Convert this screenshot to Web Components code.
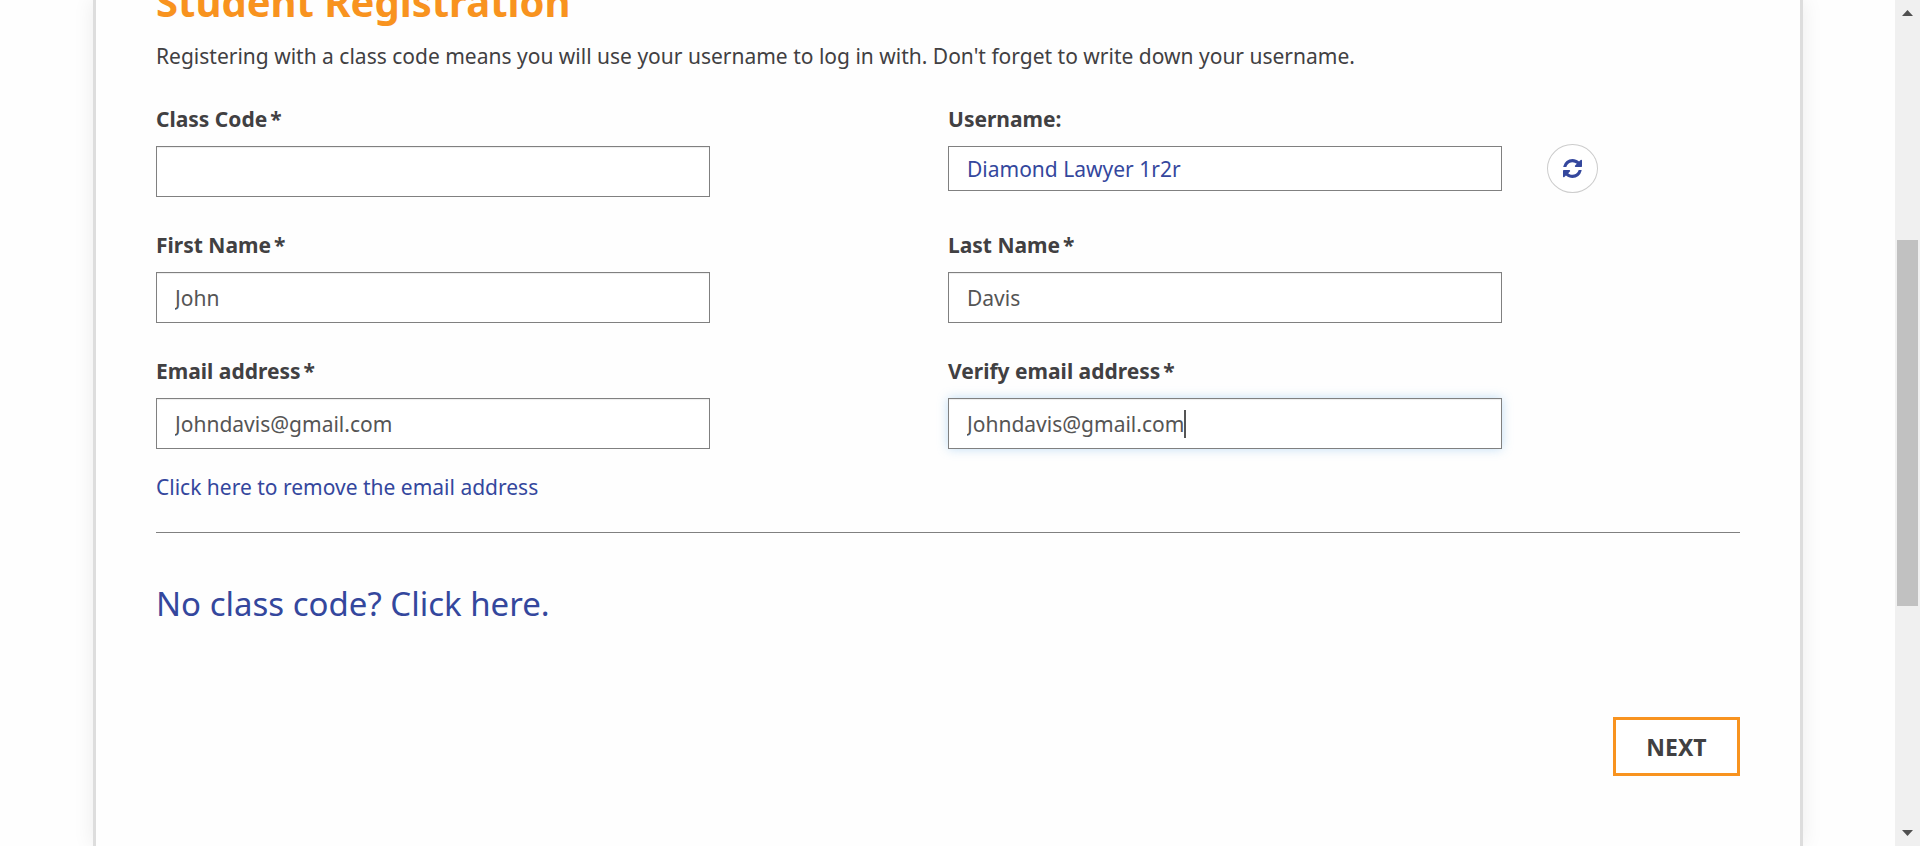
<!DOCTYPE html>
<html lang="en">
<head>
<meta charset="utf-8">
<title>Student Registration</title>
<style>
  html, body { margin: 0; height: 100%; }
  body {
    overflow: hidden;
    background: #fefefe;
    color: #414042;
    font-family: "Noto Sans", "Open Sans", sans-serif;
    font-size: 21px;
    line-height: 32px;
  }
</style>
</head>
<body>
<registration-page></registration-page>

<template id="page-template">
  <style>
    :host { display: flex; height: 100vh; overflow: hidden; }
    main { flex: 1; display: grid; min-width: 0; padding: 0 92px 0 93px; }
  </style>
  <main><registration-card></registration-card></main>
  <scroll-rail></scroll-rail>
</template>

<template id="card-template">
  <style>
    :host {
      display: block;
      border: solid #ddd;
      border-width: 0 3px;
      padding: 0 60px;
      background: #fefefe;
      box-shadow: 0 0 20px rgba(0, 0, 0, .08);
    }
    h1 {
      margin: -28px 0 0;
      color: #f8931f;
      font-size: 40px;
      line-height: 60px;
      font-weight: 700;
    }
    p { margin: 8px 0 0; }
    form { margin-top: 32px; }
    .rows { display: grid; grid-template-columns: 1fr 1fr; row-gap: 33px; }
    a { color: #34479d; text-decoration: none; }
    .remove { display: inline-block; margin-top: 22px; }
    hr { margin: 29px 0 0; border: 0; border-top: 1px solid #808080; }
    .no-code { display: inline-block; margin-top: 47px; font-size: 33px; line-height: 48px; }
    .actions { display: flex; justify-content: flex-end; margin-top: 89px; }
  </style>
  <h1>Student Registration</h1>
  <p>Registering with a class code means you will use your username to log in with. Don't forget to write down your username.</p>
  <form>
    <div class="rows">
      <form-field label="Class Code" required></form-field>
      <form-field label="Username:" value="Diamond Lawyer 1r2r" generated><refresh-button slot="action"></refresh-button></form-field>
      <form-field label="First Name" value="John" required></form-field>
      <form-field label="Last Name" value="Davis" required></form-field>
      <form-field label="Email address" value="Johndavis@gmail.com" type="email" required></form-field>
      <form-field label="Verify email address" value="Johndavis@gmail.com" type="email" required active></form-field>
    </div>
    <a class="remove" href="#remove">Click here to remove the email address</a>
    <hr>
    <a class="no-code" href="#no-code">No class code? Click here.</a>
    <div class="actions"><outline-button>NEXT</outline-button></div>
  </form>
</template>

<template id="field-template">
  <style>
    :host { display: block; }
    label { display: flex; gap: 3px; font-weight: 700; line-height: 30px; margin-bottom: 12px; }
    .line { display: flex; align-items: center; height: 51px; }
    .box { position: relative; width: 70%; }
    input {
      display: block;
      box-sizing: border-box;
      width: 100%;
      height: 51px;
      margin: 0;
      padding: 0 18px;
      border: 1px solid #808080;
      border-radius: 0;
      outline: 0;
      background: #fff;
      box-shadow: inset 0 1px 1px rgba(0, 0, 0, .075);
      color: #555;
      font: inherit;
    }
    :host([generated]) .line { height: 45px; }
    :host([generated]) input { height: 45px; color: #34479d; box-shadow: none; }
    :host([active]) input {
      caret-color: transparent;
      box-shadow: inset 0 1px 1px rgba(0, 0, 0, .075), 0 0 10px rgba(102, 175, 233, .4);
    }
    .caret { display: none; }
    :host([active]) .caret {
      display: block;
      position: absolute;
      top: 12px;
      left: calc(19px + var(--typed, 0px));
      width: 2px;
      height: 28px;
      background: #555;
    }
    ::slotted(*) { margin-left: 45px; }
  </style>
  <label for="control"><span class="text"></span><span class="star">*</span></label>
  <div class="line">
    <div class="box"><input id="control"><span class="caret"></span></div>
    <slot name="action"></slot>
  </div>
</template>

<template id="refresh-template">
  <style>
    :host { display: block; }
    button {
      display: grid;
      place-items: center;
      box-sizing: border-box;
      width: 51px;
      height: 49px;
      padding: 0;
      border: 1px solid #ccc;
      border-radius: 50%;
      background: #fff;
      color: #34479d;
    }
    svg { display: block; width: 19px; height: 19px; fill: currentColor; }
  </style>
  <button type="button" aria-label="Generate a new username">
    <svg viewBox="0 -448 1536 1536" aria-hidden="true"><path d="M1511 480q0 5-1 7-64 268-268 434.500t-478 166.500q-146 0-282.500-55t-243.500-157l-129 129q-19 19-45 19t-45-19-19-45v-448q0-26 19-45t45-19h448q26 0 45 19t19 45-19 45l-137 137q71 66 161 102t187 36q134 0 250-65t186-179q11-17 53-117 8-23 30-23h192q13 0 22.500 9.500t9.500 22.500zm25-800v448q0 26-19 45t-45 19h-448q-26 0-45-19t-19-45 19-45l138-138q-148-137-349-137-134 0-250 65t-186 179q-11 17-53 117-8 23-30 23h-199q-13 0-22.500-9.500t-9.500-22.500v-7q65-268 270-434.500t480-166.500q146 0 284 55.500t245 156.500l130-129q19-19 45-19t45 19 19 45z"/></svg>
  </button>
</template>

<template id="button-template">
  <style>
    :host { display: block; }
    button {
      display: block;
      box-sizing: border-box;
      min-width: 127px;
      height: 59px;
      padding: 0 30px;
      border: 3px solid #f8931f;
      background: #fff;
      color: #414042;
      font: inherit;
      font-size: 23px;
      font-weight: 700;
    }
  </style>
  <button type="button"><slot></slot></button>
</template>

<template id="rail-template">
  <style>
    :host {
      display: flex;
      flex-direction: column;
      box-sizing: border-box;
      flex: 0 0 25px;
      padding: 10px 2px;
      background: #f0f0f0;
    }
    svg { display: block; width: 11px; height: 6px; margin: 0 auto; fill: #505050; }
    .track { flex: 1; display: grid; grid-template-rows: 224fr 366fr 224fr; }
    .thumb { grid-row: 2; background: #c1c1c1; }
  </style>
  <svg viewBox="0 0 11 6" aria-hidden="true"><path d="M5.500 0L11 6H0z"/></svg>
  <div class="track"><div class="thumb"></div></div>
  <svg viewBox="0 0 11 6" aria-hidden="true"><path d="M0 0h11L5.500 6z"/></svg>
</template>

<script>
  class TemplateElement extends HTMLElement {
    constructor() {
      super();
      this.attachShadow({ mode: "open" })
        .append(document.getElementById(this.constructor.template).content.cloneNode(true));
    }
  }

  class RegistrationPage extends TemplateElement { static template = "page-template"; }
  class RegistrationCard extends TemplateElement { static template = "card-template"; }
  class RefreshButton extends TemplateElement { static template = "refresh-template"; }
  class OutlineButton extends TemplateElement { static template = "button-template"; }
  class ScrollRail extends TemplateElement { static template = "rail-template"; }

  class FormField extends TemplateElement {
    static template = "field-template";

    connectedCallback() {
      const root = this.shadowRoot;
      const input = root.querySelector("input");
      root.querySelector(".text").textContent = this.getAttribute("label");
      if (!this.hasAttribute("required")) root.querySelector(".star")?.remove();
      input.type = this.getAttribute("type") || "text";
      input.value = this.getAttribute("value") || "";
      input.readOnly = this.hasAttribute("generated");
      if (this.hasAttribute("active")) {
        this.placeCaret(input);
        input.addEventListener("input", () => this.placeCaret(input));
      }
    }

    // The caret stands after the last typed character.
    placeCaret(input) {
      const context = document.createElement("canvas").getContext("2d");
      context.font = '21px "Noto Sans", "Open Sans", sans-serif';
      this.style.setProperty("--typed", Math.round(context.measureText(input.value).width) + "px");
    }
  }

  customElements.define("form-field", FormField);
  customElements.define("refresh-button", RefreshButton);
  customElements.define("outline-button", OutlineButton);
  customElements.define("scroll-rail", ScrollRail);
  customElements.define("registration-card", RegistrationCard);
  customElements.define("registration-page", RegistrationPage);
</script>
</body>
</html>
